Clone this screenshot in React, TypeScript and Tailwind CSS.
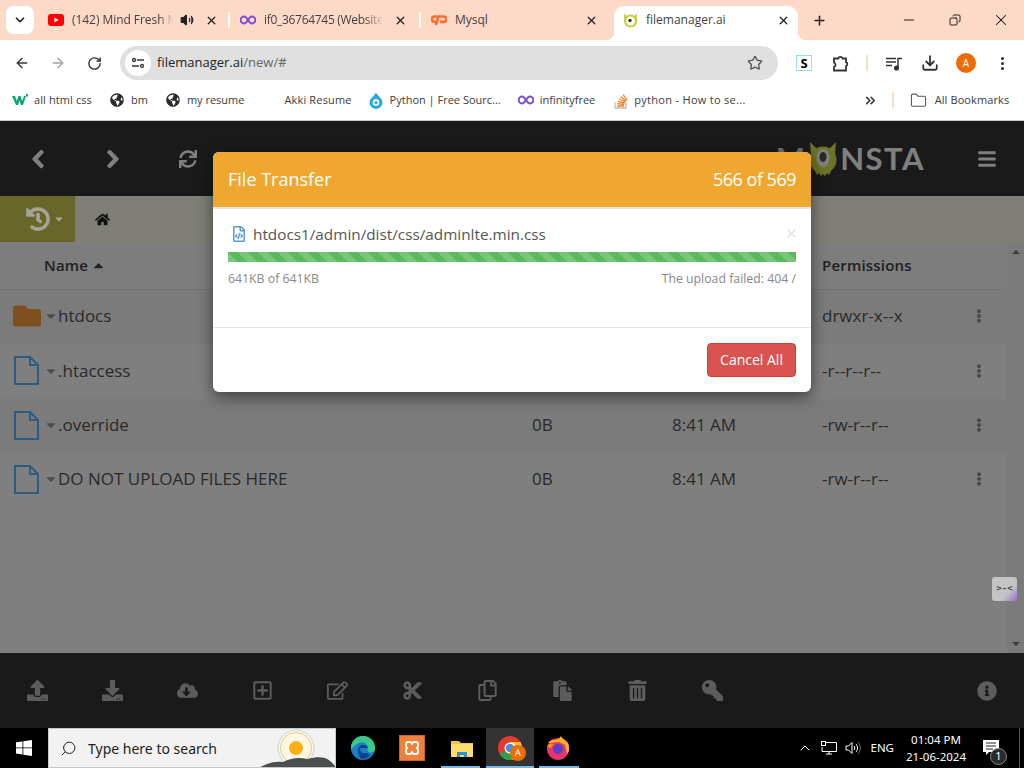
import { ChevronDown, X, Volume2, ArrowLeft, ArrowRight, RotateCw, Star, Download, EllipsisVertical, ChevronsRight, Folder, Plus, Minus, Copy, Search, ChevronUp } from "lucide-react";
import { FaChevronLeft, FaChevronRight, FaSync, FaBars, FaHistory, FaHome, FaEllipsisV, FaFolder, FaRegFileCode, FaUpload, FaDownload, FaCloudDownloadAlt, FaRegPlusSquare, FaRegEdit, FaCut, FaRegCopy, FaPaste, FaTrashAlt, FaKey, FaInfoCircle, FaCaretDown, FaCaretUp, FaGlobeAmericas } from "react-icons/fa";

function YouTube() {
  return (
    <svg width="16" height="12" viewBox="0 0 16 12">
      <rect width="16" height="12" rx="3" fill="#f00" />
      <path d="M6.4 3.4 10.6 6l-4.2 2.6z" fill="#fff" />
    </svg>
  );
}

function Infinity16() {
  return (
    <svg width="16" height="10" viewBox="0 0 16 10" fill="none" stroke="#7a50d0" strokeWidth="2">
      <path d="M8 5C6.5 2.6 5.4 1.6 4 1.6a3.4 3.4 0 0 0 0 6.8C5.4 8.4 6.5 7.4 8 5c1.5-2.4 2.6-3.4 4-3.4a3.4 3.4 0 0 1 0 6.8C10.6 8.4 9.5 7.4 8 5z" />
    </svg>
  );
}

function Cpanel() {
  return (
    <svg width="16" height="12" viewBox="0 0 16 12" fill="none" stroke="#ff6c2c" strokeWidth="2.6">
      <path d="M6 2.5H3.5a2.7 2.7 0 0 0 0 5.4H6" />
      <path d="M5 11l2.5-8.5h5a2.7 2.7 0 0 1 0 5.4H9" />
    </svg>
  );
}

function MonsterTab() {
  return (
    <svg width="15" height="15" viewBox="0 0 15 15">
      <path d="M1.5 0 3.5 3h8l2-3 .5 5-1 7H2L1 5z" fill="#c6cc3f" />
      <circle cx="7.5" cy="8" r="6.5" fill="#c6cc3f" />
      <circle cx="7.5" cy="8" r="4.5" fill="#fdfdf0" />
      <circle cx="7" cy="7.5" r="1.7" fill="#333" />
    </svg>
  );
}

function W3Icon() {
  return (
    <svg width="16" height="12" viewBox="0 0 16 12">
      <path d="M0 2h3l1.800 5L6.500 2h2l1.700 5L12 2h2l-3 9H9L7.500 6.500 6 11H4z" fill="#04aa6d" />
      <rect x="14" y="0" width="2" height="2.500" fill="#04aa6d" />
    </svg>
  );
}

function Drupal() {
  return (
    <svg width="14" height="17" viewBox="0 0 14 17">
      <path d="M7 .5C8 3.500 13.500 6 13.500 10.500a6.500 6.500 0 0 1-13 0C.5 6 6 3.500 7 .5z" fill="#2ba9e0" />
      <circle cx="7" cy="10.500" r="3.300" fill="#fff" />
      <circle cx="7" cy="10.500" r="1.600" fill="#2ba9e0" />
    </svg>
  );
}

function StackOverflow() {
  return (
    <svg width="14" height="17" viewBox="0 0 14 17" fill="none">
      <path d="M1 10.500V16h11v-5.500" stroke="#bcbbbb" strokeWidth="1.300" />
      <path d="M3 14h7M3.200 11.700l7 .8M3.800 9.300l6.800 1.900M5 6.800l6.200 3.400M6.800 4.500l5.200 4.700M9.200 2.500l3.700 5.800" stroke="#f48024" strokeWidth="1.300" />
    </svg>
  );
}

function Tab({ w, ml, icon, title, titleCls, close, audio }: { w: string; ml: string; icon: React.ReactNode; title: string; titleCls: string; close: string; audio?: boolean }) {
  return (
    <div className={`flex h-[34px] items-center pb-[6px] ${w} ${ml}`}>
      <div className="flex w-[16px] justify-center">{icon}</div>
      <span className={`ml-2 whitespace-nowrap text-[12px] text-[#45413f] ${titleCls}`}>{title}</span>
      {audio && <Volume2 size={14} className="ml-1.5 text-[#222]" fill="#222" />}
      <X size={13} strokeWidth={2.4} className={`text-[#222] ${close}`} />
    </div>
  );
}

function TabBar() {
  return (
    <div className="flex h-10 items-end bg-[#fdd9c7] pl-1.5">
      <div className="mb-[6px] flex size-7 items-center justify-center rounded-lg bg-white">
        <ChevronDown size={14} strokeWidth={3} className="text-[#222]" />
      </div>
      <Tab w="w-[180px]" ml="ml-[14px]" icon={<YouTube />} title="(142) Mind Fresh M" titleCls="w-[102px] tracking-[-0.05px] [mask-image:linear-gradient(to_right,black_85%,transparent)]" close="ml-[11px]" audio />
      <div className="mb-[12px] h-4 w-0.5 bg-white" />
      <Tab w="w-[179px]" ml="ml-[10px]" icon={<Infinity16 />} title="if0_36764745 (Website" titleCls="w-[119px] tracking-[-0.3px] [mask-image:linear-gradient(to_right,black_85%,transparent)]" close="ml-[11px]" />
      <div className="mb-[12px] h-4 w-0.5 bg-white" />
      <Tab w="w-[179px]" ml="ml-[10px]" icon={<Cpanel />} title="Mysql" titleCls="w-[130px]" close="" />
      <div className="relative ml-[4px] flex h-[34px] w-[184px] items-center rounded-t-[10px] bg-white pb-[6px] pl-[9px]">
        <span className="absolute -left-2 bottom-0 size-2 bg-[radial-gradient(circle_at_0_0,transparent_8px,white_8.5px)]" />
        <span className="absolute -right-2 bottom-0 size-2 bg-[radial-gradient(circle_at_100%_0,transparent_8px,white_8.5px)]" />
        <MonsterTab />
        <span className="ml-2 w-[130px] text-[12px] text-[#45413f]">filemanager.ai</span>
        <X size={13} strokeWidth={2.4} className="ml-[1px] text-[#222]" />
      </div>
      <Plus size={15} strokeWidth={2.4} className="mb-[12px] ml-[14px] text-[#222]" />
      <Minus size={16} strokeWidth={1.4} className="mb-[12px] ml-[74px] text-[#111]" />
      <Copy size={12} strokeWidth={1.8} className="mb-[14px] ml-[32px] -scale-x-100 text-[#111]" />
      <X size={18} strokeWidth={1.4} className="mb-[11px] ml-[31px] text-[#111]" />
    </div>
  );
}

function Toolbar() {
  return (
    <div className="flex h-11 items-center rounded-t-lg bg-white pl-[14px] pt-[2px]">
      <ArrowLeft size={16} strokeWidth={2} className="text-[#333]" />
      <ArrowRight size={16} strokeWidth={2} className="ml-[20px] text-[#a0a0a0]" />
      <RotateCw size={15} strokeWidth={2.2} className="ml-[21px] text-[#333]" />
      <div className="ml-[18px] flex h-[34px] w-[658px] items-center rounded-full bg-[#e0e0e0] pl-[5px] pr-[15px]">
        <div className="flex size-[26px] items-center justify-center rounded-full bg-white">
          <svg width="14" height="12" viewBox="0 0 14 12" fill="none" stroke="#333" strokeWidth="1.300">
            <circle cx="3" cy="3" r="1.500" />
            <path d="M6 3h7M1 9h7" />
            <circle cx="11" cy="9" r="1.500" />
          </svg>
        </div>
        <span className="ml-1.5 text-[13px]"><span className="text-[#222]">filemanager.ai</span><span className="text-[#666]">/new/#</span></span>
        <Star size={16} strokeWidth={2} className="ml-auto text-[#555]" />
      </div>
      <div className="ml-[18px] flex size-4 items-center justify-center border border-[#9bdcf2] bg-white text-[13px] font-bold leading-none text-black">S</div>
      <svg width="17" height="17" viewBox="0 0 17 17" fill="none" stroke="#333" strokeWidth="1.800" className="ml-[20px]">
        <path d="M2 3.500h4.300a2.200 2.200 0 0 1 4.200 0H14v3.700a2 2 0 0 1 0 3.800v4.500H2v-3.500a2.400 2.400 0 0 0 0-4.500z" />
      </svg>
      <div className="ml-[17px] h-4 w-0.5 bg-[#fdd9c7]" />
      <svg width="17" height="15" viewBox="0 0 17 15" fill="none" stroke="#333" strokeWidth="1.500" className="ml-[18px]">
        <path d="M0 2.500h10M0 6h10M0 9.500h6M12 12V2.500h4" />
        <circle cx="10.500" cy="12" r="1.800" fill="#333" />
      </svg>
      <Download size={18} strokeWidth={2.4} className="ml-[18px] text-[#333]" />
      <div className="ml-[17px] flex size-5 items-center justify-center rounded-full bg-[#ee6c05] text-[10px] text-white">A</div>
      <EllipsisVertical size={17} strokeWidth={2.4} className="ml-[18px] text-[#333]" />
    </div>
  );
}

function Bookmark({ icon, label, cls }: { icon?: React.ReactNode; label: string; cls: string }) {
  return (
    <div className={`flex items-center ${cls}`}>
      {icon}
      <span className="whitespace-nowrap">{label}</span>
    </div>
  );
}

function Bookmarks() {
  return (
    <div className="flex h-9 items-center bg-white pb-1 pl-3 text-[11px] text-[#3c3c3c]">
      <Bookmark icon={<W3Icon />} label="all html css" cls="gap-[6px] tracking-[0.1px]" />
      <Bookmark icon={<FaGlobeAmericas size={14} className="text-[#2a2a2a]" />} label="bm" cls="ml-[18px] gap-[7px]" />
      <Bookmark icon={<FaGlobeAmericas size={14} className="text-[#2a2a2a]" />} label="my resume" cls="ml-[18px] gap-[7px]" />
      <Bookmark label="Akki Resume" cls="ml-[40px] tracking-[0.15px]" />
      <Bookmark icon={<Drupal />} label="Python | Free Sourc..." cls="ml-[17px] gap-[7px]" />
      <Bookmark icon={<Infinity16 />} label="infinityfree" cls="ml-[17px] gap-[6px]" />
      <Bookmark icon={<StackOverflow />} label="python - How to se..." cls="ml-[19px] gap-[6px] tracking-[0.3px]" />
      <ChevronsRight size={15} strokeWidth={2.4} className="ml-[117px] text-[#333]" />
      <div className="ml-[14px] h-4 w-0.5 bg-[#fdd9c7]" />
      <Folder size={17} strokeWidth={1.5} className="ml-[16px] text-[#555]" />
      <span className="ml-2 whitespace-nowrap tracking-[0.1px]">All Bookmarks</span>
    </div>
  );
}

function FileIcon() {
  return (
    <svg width="25" height="29" viewBox="0 0 25 29" fill="none" stroke="#5cb8ff" strokeWidth="2" className="ml-[1px]">
      <path d="M1 1h15l8 8v19H1zM16 1v8h8" />
    </svg>
  );
}

const rows = [
  { name: "htdocs", folder: true, size: "", time: "", perm: "drwxr-x--x", bg: "bg-[#f7f7f7]", h: "h-[54px]" },
  { name: ".htaccess", folder: false, size: "", time: "", perm: "-r--r--r--", bg: "bg-[#ffffff]", h: "h-[55px]" },
  { name: ".override", folder: false, size: "0B", time: "8:41 AM", perm: "-rw-r--r--", bg: "bg-[#f7f7f7]", h: "h-[54px]" },
  { name: "DO NOT UPLOAD FILES HERE", folder: false, size: "0B", time: "8:41 AM", perm: "-rw-r--r--", bg: "bg-[#ffffff]", h: "h-[54px]" },
];

const bottomIcons = [FaUpload, FaDownload, FaCloudDownloadAlt, FaRegPlusSquare, FaRegEdit, FaCut, FaRegCopy, FaPaste, FaTrashAlt];

function FileManager() {
  return (
    <div className="relative flex h-[608px] flex-col border-t border-[#c8c8c8] bg-white font-['Open_Sans',sans-serif]">
      <div className="flex h-[75px] shrink-0 items-center bg-[#343434] text-[#fff]">
        <div className="flex w-[75px] justify-center"><FaChevronLeft size={20} stroke="currentColor" strokeWidth={30} /></div>
        <div className="flex w-[75px] justify-center"><FaChevronRight size={20} stroke="currentColor" strokeWidth={30} /></div>
        <div className="flex w-[75px] justify-center"><FaSync size={18} /></div>
        <div className="ml-auto flex items-center">
          <span className="font-['Lato',sans-serif] text-[31px] font-bold tracking-[1px] text-[#e0e0e0]">M</span>
          <svg width="28" height="34" viewBox="0 0 28 34" className="ml-[3px] mr-[3px]">
            <path d="M1 0l7 7-6 6zM27 0l-7 7 6 6z" fill="#dae64c" />
            <circle cx="14" cy="18" r="13.500" fill="#dae64c" />
            <path d="M6 29l2 4 2-2 2 3 2-2 2 2 2-3 2 2 2-4z" fill="#dae64c" />
            <ellipse cx="14" cy="16" rx="6.500" ry="9" fill="#fff" />
            <ellipse cx="14" cy="15" rx="3.500" ry="5" fill="#555" />
          </svg>
          <span className="font-['Lato',sans-serif] text-[31px] font-bold tracking-[1.5px] text-white">NSTA</span>
        </div>
        <div className="ml-[44px] mr-[19px] flex w-[36px] justify-center"><FaBars size={20} /></div>
      </div>

      <div className="flex h-[47px] shrink-0 items-center border-b border-[#fff] bg-[#fffff0]">
        <div className="flex h-full w-[75px] items-center bg-[#d0cc52] pl-[26px] text-[#a5a59d]">
          <FaHistory size={24} className="relative z-10" stroke="currentColor" strokeWidth={12} />
          <FaCaretDown size={12} className="relative z-10 ml-[3px]" />
        </div>
        <FaHome size={15} className="ml-5 text-[#222]" />
      </div>

      <div className="flex min-h-0 flex-1">
        <div className="flex min-w-0 flex-1 flex-col">
          <div className="flex h-[47px] shrink-0 items-center border-b border-[#e8e8e8] bg-[#fafafa] pb-[2px] text-[15px] font-semibold tracking-[0.2px] text-[#444]">
            <div className="flex w-[822px] items-center pl-11">Name<FaCaretUp size={15} className="ml-[3px]" /></div>
            <div>Permissions</div>
          </div>
          {rows.map((r) => (
            <div key={r.name} className={`flex ${r.h} shrink-0 items-center pb-0.5 text-[17px] text-[#555] ${r.bg}`}>
              <div className="flex w-[532px] items-center pl-[13px]">
                {r.folder ? <FaFolder size={28} className="text-[#ff9f3f]" /> : <FileIcon />}
                <FaCaretDown size={14} className={`text-[#999] ${r.folder ? "ml-[3px]" : "ml-[5px]"}`} />
                <span className="whitespace-nowrap">{r.name}</span>
              </div>
              <div className="w-[140px]">{r.size}</div>
              <div className="w-[150px]">{r.time}</div>
              <div className="w-[150px]">{r.perm}</div>
              <FaEllipsisV size={14} className="text-[#909090]" />
            </div>
          ))}
          <div className="flex-1 bg-white" />
        </div>
        <div className="flex w-[17px] shrink-0 flex-col items-center justify-between bg-[#f4f4f4] py-[7px]">
          <svg width="8" height="4" viewBox="0 0 8 4"><path d="M0 4 4 0l4 4z" fill="#7c7c7c" /></svg>
          <svg width="8" height="4" viewBox="0 0 8 4"><path d="M0 0h8L4 4z" fill="#7c7c7c" /></svg>
        </div>
      </div>

      <div className="flex h-[75px] shrink-0 items-center bg-[#343434] text-[#b8b8b8]">
        {bottomIcons.map((Icon, i) => (
          <div key={i} className="flex w-[75px] justify-center"><Icon size={21} /></div>
        ))}
        <div className="flex w-[75px] justify-center"><FaKey size={21} className="-scale-x-100" /></div>
        <div className="ml-auto mr-[27px] flex w-[20px] justify-center"><FaInfoCircle size={20} /></div>
      </div>

      <div className="absolute inset-0 bg-black/50" />

      <div className="absolute left-[992px] top-[456px] flex h-[24px] w-[25px] items-center justify-center rounded-[3px] bg-[linear-gradient(135deg,#c4c4c6_65%,#9a68c8)] font-['DejaVu_Sans_Mono',monospace] text-[9px] font-bold text-[#444]">&gt;-&lt;</div>

      <div className="absolute left-[213px] top-[31px] w-[598px] overflow-hidden rounded-md bg-white shadow-[0_5px_15px_rgba(0,0,0,0.5)]">
        <div className="flex h-[57px] items-center justify-between border-b-2 border-[#e5e5e5] bg-[#f0a72f] px-[15px] text-[18px] text-white">
          <span>File Transfer</span>
          <span className="tracking-[-0.5px]">566 of 569</span>
        </div>
        <div className="h-[118px] px-[15px] pt-[14px]">
          <div className="flex h-[22px] items-center">
            <FaRegFileCode size={16} className="ml-[3px] text-[#5b9bd5]" />
            <span className="ml-[6px] text-[15.3px] text-[#555]">htdocs1/admin/dist/css/adminlte.min.css</span>
            <X size={15} strokeWidth={1.6} className="-mr-[3px] mb-px ml-auto text-[#ccc]" />
          </div>
          <div className="mt-[7px] h-2.5 bg-[repeating-linear-gradient(45deg,#78c679_0,#78c679_7.07px,#5cb85c_7.07px,#5cb85c_14.14px)]" />
          <div className="mt-2 flex justify-between text-[12.3px] text-[#888]">
            <span>641KB of 641KB</span>
            <span>The upload failed: 404 /</span>
          </div>
        </div>
        <div className="flex h-[65px] items-center justify-end border-t border-[#e5e5e5] px-[15px]">
          <button className="h-[34px] w-[89px] rounded border border-[#d43f3a] bg-[#d9534f] pb-0.5 text-[14px] text-white">Cancel All</button>
        </div>
      </div>
    </div>
  );
}

function Taskbar() {
  return (
    <div className="flex h-10 items-center bg-black font-['Noto_Sans',sans-serif] text-white">
      <div className="flex w-12 justify-center">
        <svg width="16" height="16" viewBox="0 0 16 16" fill="#fff">
          <path d="M0 2.300 6.500 1.400v6.100H0zM7.300 1.300 16 0v7.500H7.300zM0 8.300h6.500v6.200L0 13.600zM7.300 8.300H16V16l-8.700-1.300z" />
        </svg>
      </div>
      <div className="relative flex h-10 w-[288px] items-center overflow-hidden border border-[#c8c8c8] bg-[#f2f2f2] pl-[11px]">
        <Search size={17} strokeWidth={1.4} className="-scale-x-100 text-[#222]" />
        <span className="ml-[11px] text-[14px] text-[#222]">Type here to search</span>
        <svg width="80" height="40" viewBox="0 0 80 40" className="absolute left-[208px] top-0">
          <circle cx="39" cy="19" r="18" fill="#fdf5e0" stroke="#bfd9ee" />
          <circle cx="39" cy="19" r="15.500" fill="#fff7e5" stroke="#f7c684" />
          <circle cx="39" cy="19" r="7" fill="#fbb018" />
          <path d="M0 40c8-5 16-8 26-7 8-4 16-5 24-3 8-2 14-2 18-1 5 2 9 6 12 11z" fill="#4a4f50" />
        </svg>
      </div>
      <div className="flex w-[50px] justify-center pl-[4px]">
        <svg width="24" height="24" viewBox="0 0 24 24">
          <circle cx="12" cy="12" r="12" fill="#1d7fc4" />
          <path d="M12 0a12 12 0 0 1 12 13c0 3-3 4-6 3-2-1-2-3-1-4 0-5-6-8-11-4-3 2-5 4-6 6A12 12 0 0 1 12 0z" fill="#39c88a" />
          <path d="M7 14c0-3 3-5 5-5 4 0 5 3 5 3H9c-1 4 3 6 7 5l3 2c-2 3-5 4-8 4-3-1-4-6-4-9z" fill="#0c3f8c" />
        </svg>
      </div>
      <div className="flex w-[52px] justify-center">
        <div className="flex size-6 items-center justify-center bg-[#f0813a] ring-1 ring-[#c8621f]">
          <svg width="16" height="16" viewBox="0 0 16 16" fill="none" stroke="#fff" strokeWidth="1.800">
            <path d="M4 2h2.500L8 4l1.500-2H12a2 2 0 0 1 2 2v1.500a2 2 0 0 1-2 2.500 2 2 0 0 1 2 2.500V12a2 2 0 0 1-2 2H9.500L8 12l-1.500 2H4a2 2 0 0 1-2-2v-1.500A2 2 0 0 1 4 8a2 2 0 0 1-2-2.500V4a2 2 0 0 1 2-2z" />
          </svg>
        </div>
      </div>
      <div className="relative flex h-10 w-[48px] justify-center pt-[11px]">
        <svg width="22" height="18" viewBox="0 0 22 18">
          <path d="M0 2h8l2 2h12v14H0z" fill="#f3c53c" />
          <rect y="5" width="22" height="13" fill="#fddc6f" />
          <path d="M6 13h10v5h-3v-2H9v2H6z" fill="#2d8fd6" />
        </svg>
        <div className="absolute bottom-0 left-[3px] right-[6px] h-0.5 bg-[#76b9ed]" />
      </div>
      <div className="relative flex h-10 w-[48px] items-center justify-center bg-[#333]">
        <svg width="24" height="24" viewBox="0 0 24 24">
          <circle cx="12" cy="12" r="12" fill="#e33b2e" />
          <path d="M12 12 1.600 18A12 12 0 0 0 14 23.800z" fill="#2aa14b" />
          <path d="M12 12l2 11.800A12 12 0 0 0 22.400 6H12z" fill="#fbc22d" />
          <circle cx="12" cy="12" r="5.500" fill="#fff" />
          <circle cx="12" cy="12" r="4.300" fill="#4a90e2" />
        </svg>
        <div className="absolute left-[24px] top-[17px] flex size-4 items-center justify-center rounded-full bg-[#ee6c05] text-[9px] text-white">A</div>
        <div className="absolute bottom-0 left-0 right-0 h-0.5 bg-[#76b9ed]" />
      </div>
      <div className="relative flex h-10 w-[48px] items-center justify-center">
        <svg width="24" height="24" viewBox="0 0 24 24">
          <circle cx="12" cy="13" r="11" fill="#e8336c" />
          <path d="M2 7C5 3 8 4 10 4c2-1 4-2 5-4 1 3 5 4 7 7 2 5 1 9-1 11l-2-9-6-3z" fill="#ffb21e" />
          <path d="M1 10c2-3 5-3 7-2L5 12c-2 0-3-1-4-2z" fill="#ff8a16" />
          <circle cx="12" cy="13" r="5" fill="#5b3fc4" />
        </svg>
        <div className="absolute bottom-0 left-[5px] right-[3px] h-0.5 bg-[#76b9ed]" />
      </div>
      <div className="ml-auto flex h-10 items-center">
        <ChevronUp size={16} strokeWidth={1.5} />
        <svg width="16" height="14" viewBox="0 0 16 14" fill="none" stroke="#fff" strokeWidth="1" className="ml-[8px]">
          <path d="M4 1.500h11.500v9H1V6M8 10.500V13M5 13h6" />
          <rect x=".5" y=".5" width="4" height="4" />
        </svg>
        <svg width="16" height="14" viewBox="0 0 16 14" fill="none" stroke="#fff" strokeWidth="1" className="ml-[8px]">
          <path d="M1 5h2.500L7 1.500v11L3.500 9H1zM9 5c1 1 1 3 0 4M11 3c2 2 2 6 0 8" />
          <path d="M13 1c3 3 3 9 0 12" stroke="#777" />
        </svg>
        <span className="ml-[9px] text-[11.5px]">ENG</span>
        <div className="ml-[5px] flex w-[74px] flex-col items-center text-[11.5px] leading-[17px]">
          <span>01:04 PM</span>
          <span>21-06-2024</span>
        </div>
        <div className="relative ml-[6px] h-10 w-[28px]">
          <svg width="17" height="15" viewBox="0 0 17 15" className="absolute left-[4px] top-[12px]">
            <path d="M0 0h16v12H6l-3 3v-3H0z" fill="#fff" />
            <path d="M3 3h10M3 6h10M3 9h7" stroke="#222" />
          </svg>
          <div className="absolute left-[11px] top-[20px] flex size-[17px] items-center justify-center rounded-full border border-[#888] bg-[#2b2b2b] text-[11px]">1</div>
        </div>
        <div className="ml-[12px] mr-[4px] h-10 w-px bg-[#555]" />
      </div>
    </div>
  );
}

export default function App() {
  return (
    <div className="h-[768px] w-[1024px] overflow-hidden bg-white font-['Open_Sans',sans-serif]">
      <TabBar />
      <Toolbar />
      <Bookmarks />
      <FileManager />
      <Taskbar />
    </div>
  );
}
